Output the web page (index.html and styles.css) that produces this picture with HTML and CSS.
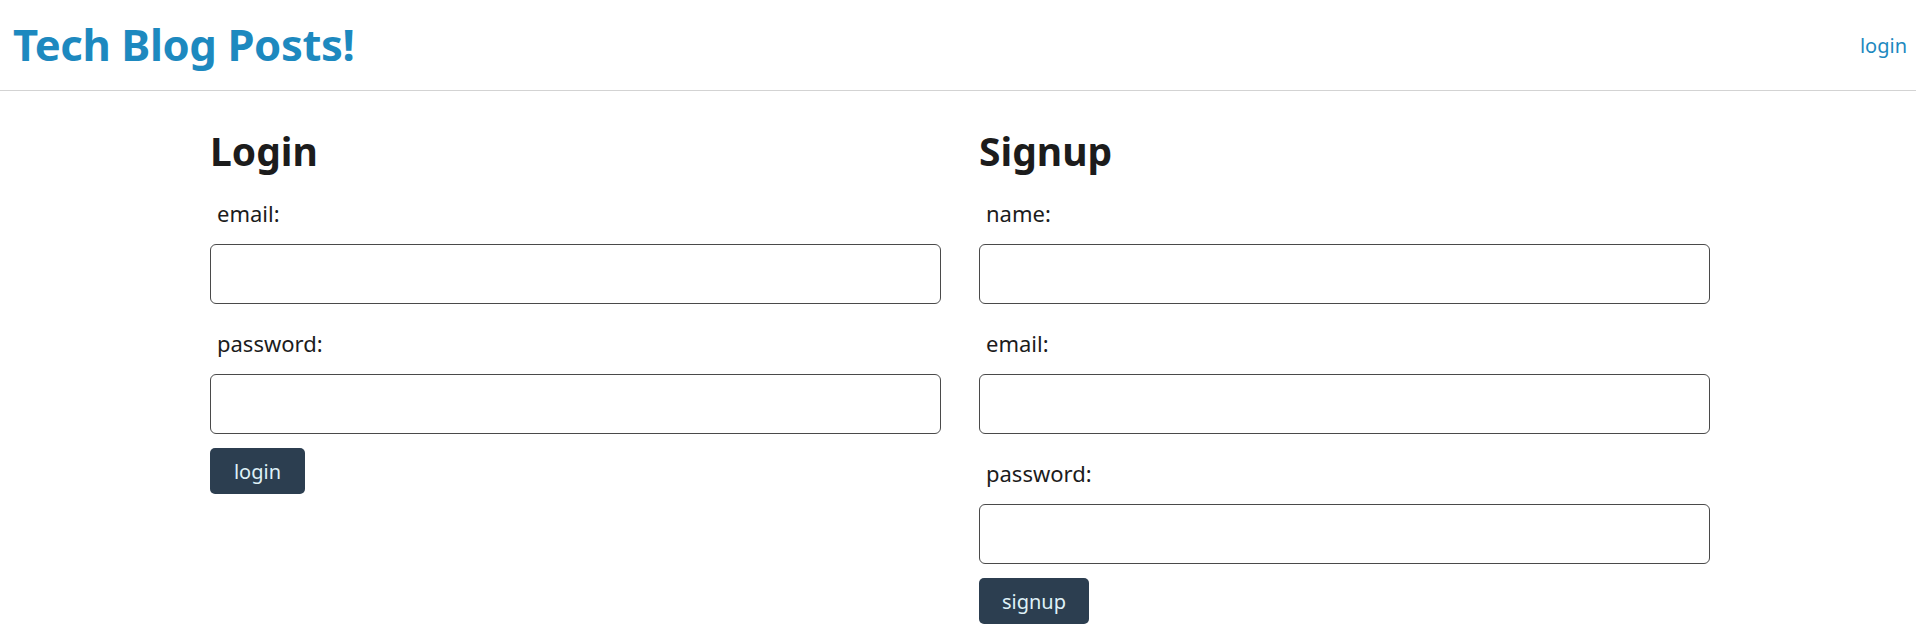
FILE: index.html
```html
<!DOCTYPE html>
<html lang="en">
<head>
<meta charset="utf-8">
<title>Tech Blog Posts!</title>
<link rel="stylesheet" href="styles.css">
</head>
<body>
<header class="site-header">
  <h1 class="site-title">Tech Blog Posts!</h1>
  <nav class="site-nav"><a class="nav-link" href="#">login</a></nav>
</header>
<main class="auth">
  <section class="auth-col">
    <h2 class="auth-title">Login</h2>
    <form class="auth-form">
      <label class="field-label" for="login-email">email:</label>
      <input class="field-input" id="login-email" type="text">
      <label class="field-label" for="login-password">password:</label>
      <input class="field-input" id="login-password" type="password">
      <button class="btn btn-login" type="button">login</button>
    </form>
  </section>
  <section class="auth-col">
    <h2 class="auth-title">Signup</h2>
    <form class="auth-form">
      <label class="field-label" for="signup-name">name:</label>
      <input class="field-input" id="signup-name" type="text">
      <label class="field-label" for="signup-email">email:</label>
      <input class="field-input" id="signup-email" type="text">
      <label class="field-label" for="signup-password">password:</label>
      <input class="field-input" id="signup-password" type="password">
      <button class="btn btn-signup" type="button">signup</button>
    </form>
  </section>
</main>
</body>
</html>
```
FILE: styles.css
```css
* { box-sizing: border-box; }
html, body { margin: 0; padding: 0; background: #fff; }
body {
  font-family: "Noto Sans", "Open Sans", sans-serif;
  color: #1c1c1c;
  overflow: hidden;
}
.site-header {
  height: 91px;
  display: flex;
  align-items: center;
  justify-content: space-between;
  padding: 0 9px 0 13px;
  border-bottom: 1px solid #d3d3d3;
}
.site-title {
  margin: 0 0 2px;
  font-size: 43.6px;
  line-height: 50px;
  font-weight: 700;
  color: #1d89bf;
  letter-spacing: -0.4px;
}
.nav-link {
  font-size: 20px;
  color: #1d89bf;
  text-decoration: none;
}
.auth {
  display: grid;
  grid-template-columns: 731px 731px;
  column-gap: 38px;
  justify-content: center;
  padding-left: 4px;
}
.auth-title {
  margin: 32px 0 0;
  font-size: 39px;
  line-height: 56px;
  font-weight: 700;
  color: #1c1c1c;
}
.auth-form {
  display: flex;
  flex-direction: column;
  align-items: flex-start;
}
.field-label {
  font-size: 22px;
  line-height: 30px;
  padding-left: 7px;
  margin: 24px 0 16px;
}
.auth-title + .auth-form .field-label:first-child { margin-top: 19px; }
.field-input {
  width: 100%;
  height: 60px;
  border: 1px solid #4a4a4a;
  border-radius: 6px;
  background: #fff;
  font: inherit;
}
.btn {
  margin-top: 14px;
  height: 46px;
  border: none;
  border-radius: 5px;
  background: #2c3e50;
  color: #dff1f7;
  font-family: inherit;
  font-size: 20px;
  padding: 0 22px;
}
.btn-login { width: 95px; }
.btn-signup { width: 110px; }
```
